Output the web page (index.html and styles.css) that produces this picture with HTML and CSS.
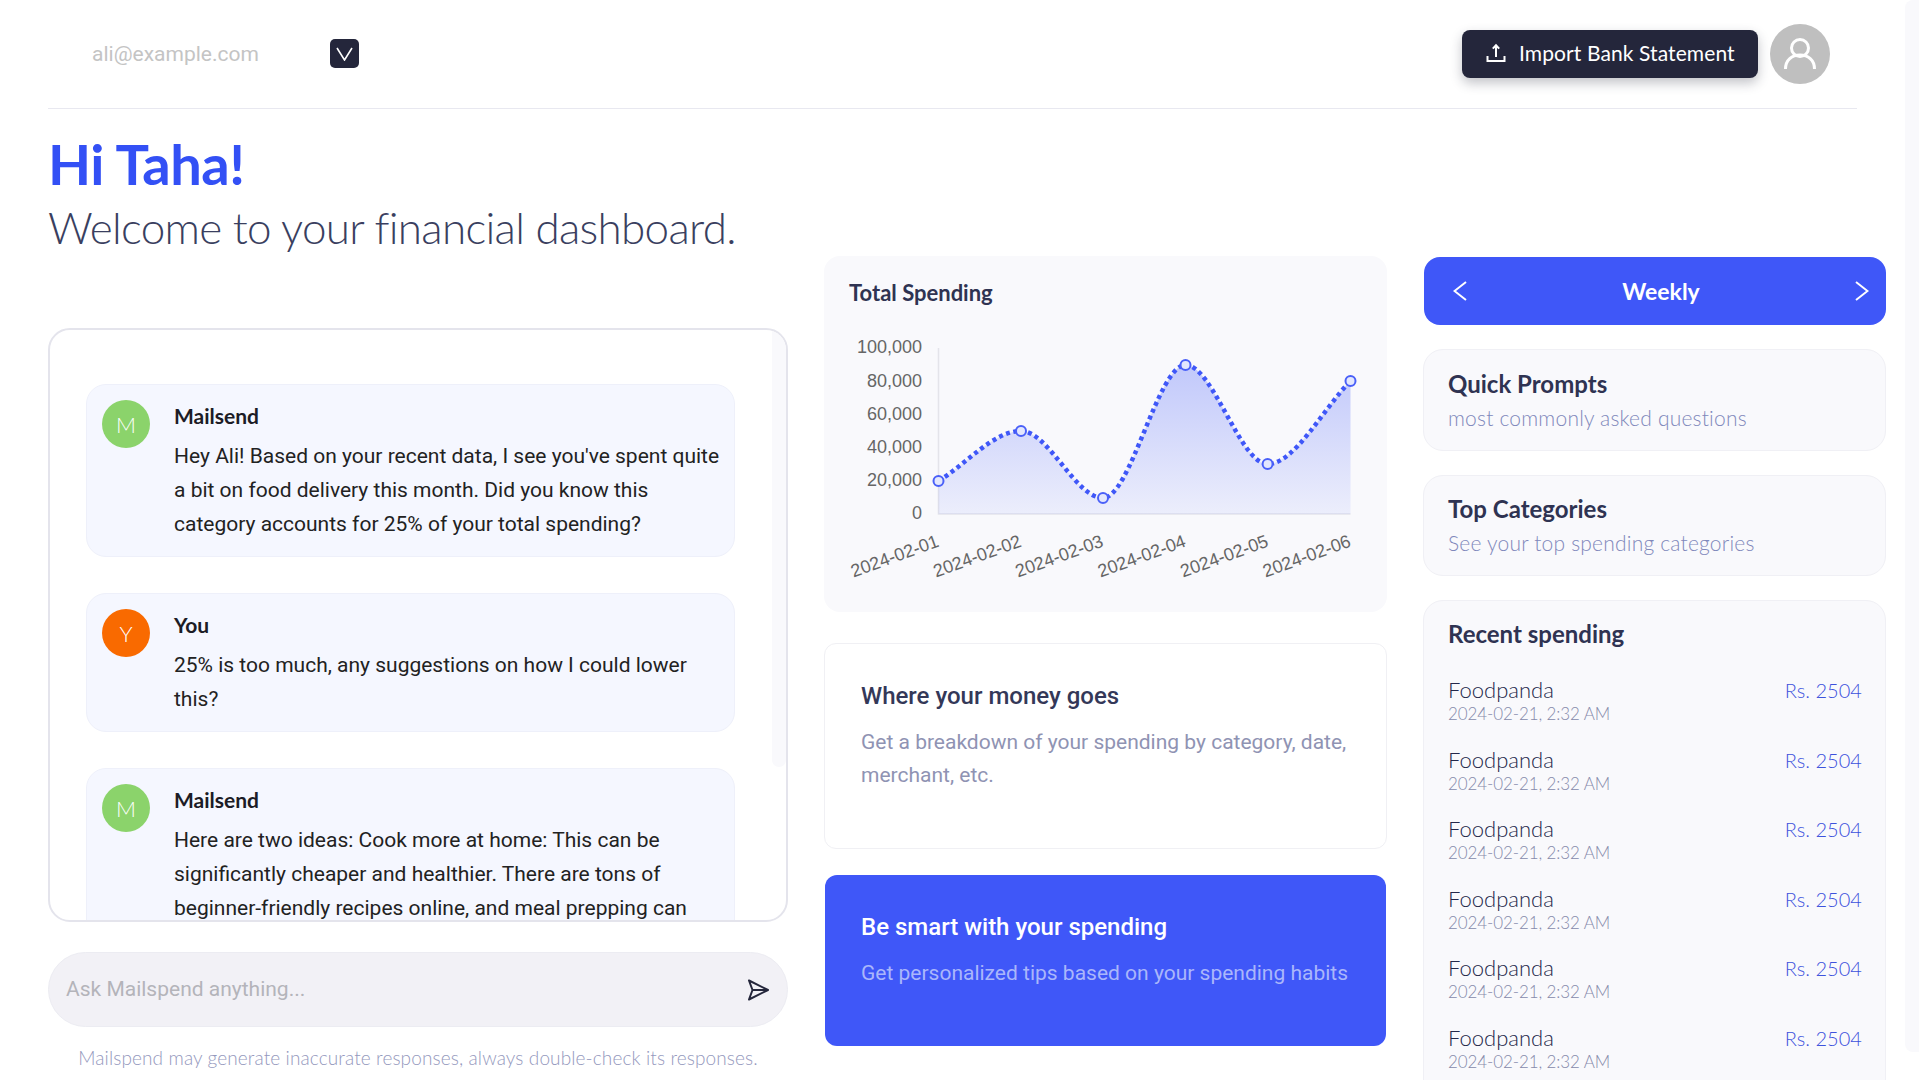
FILE: index.html
```html
<!DOCTYPE html>
<html lang="en">
<head>
<meta charset="utf-8">
<title>Mailspend dashboard</title>
<link rel="stylesheet" href="styles.css">
</head>
<body>
<div class="app">
  <div class="main">
    <header class="topbar">
      <div class="account">
        <span class="email">ali@example.com</span>
        <button class="drop" aria-label="Switch account">
          <svg width="17" height="14" viewBox="0 0 17 14"><path d="M1 1 8.500 13 16 1" class="thin"/></svg>
        </button>
      </div>
      <div class="actions">
        <button class="import">
          <svg width="20" height="20" viewBox="0 0 20 20"><path d="M10 14V2.500M6.800 5.600 10 2.200l3.200 3.400M1.500 13v5h17v-5" class="thin2"/></svg>
          <span>Import Bank Statement</span>
        </button>
        <div class="user">
          <svg width="36" height="36" viewBox="0 0 36 36"><circle cx="18" cy="12" r="8.500" class="uline"/><path d="M3.500 33c0-9 6.500-14 14.500-14s14.500 5 14.500 14" class="uline"/></svg>
        </div>
      </div>
    </header>

    <div class="grid">
      <section class="left">
        <h1 class="hi">Hi Taha!</h1>
        <p class="welcome">Welcome to your financial dashboard.</p>
        <div class="chat">
          <div class="chat-track"></div>
          <article class="msg">
            <div class="ava green">M</div>
            <div class="body">
              <h3>Mailsend</h3>
              <p>Hey Ali! Based on your recent data, I see you've spent quite a bit on food delivery this month. Did you know this category accounts for 25% of your total spending?</p>
            </div>
          </article>
          <article class="msg">
            <div class="ava orange">Y</div>
            <div class="body">
              <h3>You</h3>
              <p>25% is too much, any suggestions on how I could lower this?</p>
            </div>
          </article>
          <article class="msg">
            <div class="ava green">M</div>
            <div class="body">
              <h3>Mailsend</h3>
              <p>Here are two ideas: Cook more at home: This can be significantly cheaper and healthier. There are tons of beginner-friendly recipes online, and meal prepping can</p>
            </div>
          </article>
        </div>
        <div class="ask">
          <span class="ph">Ask Mailspend anything...</span>
          <svg width="22" height="22" viewBox="0 0 22 22"><path d="M2 1.500 21 11 2 20.500 5.500 11ZM5.500 11H21" class="send"/></svg>
        </div>
        <p class="note">Mailspend may generate inaccurate responses, always double-check its responses.</p>
      </section>

      <section class="mid">
        <div class="chart-card">
          <h2 class="chart-title">Total Spending</h2>
          <svg class="chart" width="561" height="276" viewBox="824 336 561 276">
            <defs>
              <linearGradient id="fill" x1="0" y1="0" x2="0" y2="1">
                <stop offset="0" stop-color="#3f57f8" stop-opacity=".3"/>
                <stop offset="1" stop-color="#3f57f8" stop-opacity=".07"/>
              </linearGradient>
            </defs>
            <path d="M938.500 348V514H1350.500" class="axis"/>
            <path d="M938.500 481C966 464.300 993.500 431 1021 431C1048.500 431 1075.500 498 1103 498C1130.500 498 1158 365 1185.500 365C1213 365 1240 464 1267.600 464C1295 464 1323 408.700 1350.500 381V514H938.500Z" fill="url(#fill)"/>
            <path d="M938.500 481C966 464.300 993.500 431 1021 431C1048.500 431 1075.500 498 1103 498C1130.500 498 1158 365 1185.500 365C1213 365 1240 464 1267.600 464C1295 464 1323 408.700 1350.500 381" class="line"/>
            <g class="pts">
              <circle cx="938.500" cy="481" r="5"/><circle cx="1021" cy="431" r="5"/><circle cx="1103" cy="498" r="5"/><circle cx="1185.500" cy="365" r="5"/><circle cx="1267.600" cy="464" r="5"/><circle cx="1350.500" cy="381" r="5"/>
            </g>
            <g class="yl">
              <text x="922" y="353">100,000</text><text x="922" y="386.500">80,000</text><text x="922" y="419.500">60,000</text><text x="922" y="452.500">40,000</text><text x="922" y="486">20,000</text><text x="922" y="519">0</text>
            </g>
            <g class="xl">
              <text transform="translate(940 546) rotate(-20)">2024-02-01</text>
              <text transform="translate(1022.500 546) rotate(-20)">2024-02-02</text>
              <text transform="translate(1104.500 546) rotate(-20)">2024-02-03</text>
              <text transform="translate(1187 546) rotate(-20)">2024-02-04</text>
              <text transform="translate(1269.500 546) rotate(-20)">2024-02-05</text>
              <text transform="translate(1352 546) rotate(-20)">2024-02-06</text>
            </g>
          </svg>
        </div>
        <div class="tile plain">
          <h3>Where your money goes</h3>
          <p>Get a breakdown of your spending by category, date, merchant, etc.</p>
        </div>
        <div class="tile blue">
          <h3>Be smart with your spending</h3>
          <p>Get personalized tips based on your spending habits</p>
        </div>
      </section>

      <section class="right">
        <div class="period">
          <svg width="14" height="20" viewBox="0 0 14 20"><path d="M13 1 1.500 10 13 19" class="chev"/></svg>
          <span>Weekly</span>
          <svg width="14" height="20" viewBox="0 0 14 20"><path d="M1 1 12.500 10 1 19" class="chev"/></svg>
        </div>
        <div class="card short">
          <h3>Quick Prompts</h3>
          <p>most commonly asked questions</p>
        </div>
        <div class="card short">
          <h3>Top Categories</h3>
          <p>See your top spending categories</p>
        </div>
        <div class="card recent">
          <h3>Recent spending</h3>
          <ul class="rows">
            <li><div><strong>Foodpanda</strong><time>2024-02-21, 2:32 AM</time></div><span>Rs. 2504</span></li>
            <li><div><strong>Foodpanda</strong><time>2024-02-21, 2:32 AM</time></div><span>Rs. 2504</span></li>
            <li><div><strong>Foodpanda</strong><time>2024-02-21, 2:32 AM</time></div><span>Rs. 2504</span></li>
            <li><div><strong>Foodpanda</strong><time>2024-02-21, 2:32 AM</time></div><span>Rs. 2504</span></li>
            <li><div><strong>Foodpanda</strong><time>2024-02-21, 2:32 AM</time></div><span>Rs. 2504</span></li>
            <li><div><strong>Foodpanda</strong><time>2024-02-21, 2:32 AM</time></div><span>Rs. 2504</span></li>
          </ul>
        </div>
      </section>
    </div>
  </div>
  <div class="pagebar"></div>
</div>
</body>
</html>
```
FILE: styles.css
```css
* { box-sizing: border-box; }
html, body { margin: 0; height: 100%; overflow: hidden; background: #fff; }
body { font-family: "Lato", "Liberation Sans", sans-serif; color: #2f3352; }
h1, h2, h3, p, ul { margin: 0; padding: 0; }
button { border: 0; font: inherit; padding: 0; }

.app { display: flex; height: 1080px; overflow: hidden; }
.main { width: 1905px; padding-left: 48px; flex: none; }
.pagebar { width: 14px; height: 1052px; background: #f9f9fc; border-radius: 8px 0 0 8px; flex: none; }

.topbar { width: 1809px; height: 109px; border-bottom: 1px solid #e8e8f0; display: flex; justify-content: space-between; align-items: center; padding: 0 27px 1px 44px; }
.account { display: flex; align-items: center; gap: 72px; }
.email { font-family: Roboto, sans-serif; font-size: 21px; color: #c4c4c4; width: 166px; white-space: nowrap; }
.drop { width: 29px; height: 29px; background: #24263b; border-radius: 5px; display: flex; align-items: center; justify-content: center; }
.thin { fill: none; stroke: #fff; stroke-width: 1.600; }
.actions { display: flex; align-items: center; gap: 12px; }
.import { width: 296px; height: 48px; background: #24263b; color: #fff; border-radius: 8px; display: flex; align-items: center; gap: 13px; padding: 0 0 2px 24px; font-size: 21px; font-weight: 400; letter-spacing: .1px; box-shadow: 0 5px 12px rgba(36,38,59,.28); }
.thin2 { fill: none; stroke: #fff; stroke-width: 2; }
.user { width: 60px; height: 60px; border-radius: 50%; background: #bfbfbf; display: flex; align-items: center; justify-content: center; }
.uline { fill: none; stroke: #fff; stroke-width: 3; }

.grid { display: grid; grid-template-columns: 740px 563px 463px; column-gap: 36px; }
.hi { margin-top: 23px; font-size: 56px; line-height: 64px; font-weight: 700; color: #3350f5; letter-spacing: -.5px; }
.welcome { margin-top: 3px; font-size: 44px; line-height: 56px; font-weight: 300; color: #3a3f60; letter-spacing: -.7px; }
.chat { position: relative; margin-top: 73px; height: 594px; border: 2px solid #e4e4ec; border-radius: 22px; overflow: hidden; padding: 54px 51px 0 36px; display: flex; flex-direction: column; gap: 36px; }
.chat-track { position: absolute; right: 0; top: 0; width: 14px; height: 437px; background: #f9f9fc; border-radius: 0 8px 8px 8px; }
.msg { background: #f5f7ff; border: 1px solid #eef0fa; border-radius: 20px; padding: 15px 8px 15px 15px; display: flex; gap: 24px; flex: none; }
.ava { width: 48px; height: 48px; border-radius: 50%; color: #fff; display: flex; align-items: center; justify-content: center; font-size: 22px; font-weight: 300; flex: none; }
.green { background: #8bd36b; }
.orange { background: #f96a00; }
.body h3 { font-size: 21px; line-height: 32px; font-weight: 700; color: #1c1c26; }
.body p { margin-top: 7px; font-family: Roboto, sans-serif; font-size: 21px; line-height: 34px; color: #222; }

.ask { margin-top: 30px; height: 75px; background: #f2f1f6; border: 1px solid #ececf2; border-radius: 38px; display: flex; align-items: center; justify-content: space-between; padding: 0 18px 0 17px; }
.ph { font-family: Roboto, sans-serif; font-size: 21px; line-height: 24px; padding-bottom: 1px; color: #b4b4ba; }
.send { fill: none; stroke: #24263b; stroke-width: 2; stroke-linejoin: round; }
.note { margin-top: 19px; text-align: center; font-size: 19px; line-height: 24px; font-weight: 300; color: #9498bd; letter-spacing: .12px; }

.mid { padding-top: 147px; display: flex; flex-direction: column; }
.chart-card { height: 356px; background: #f9f9fc; border-radius: 16px; padding-top: 23px; }
.chart-title { font-size: 22px; line-height: 28px; font-weight: 700; padding-left: 25px; color: #2f3352; }
.chart { display: block; margin-top: 29px; }
.axis { fill: none; stroke: #e4e4ea; stroke-width: 1.500; }
.line { fill: none; stroke: #3f57f8; stroke-width: 4.500; stroke-dasharray: 4 3.500; }
.pts circle { fill: #e3e7fd; stroke: #4a60f8; stroke-width: 2; }
.yl text { font-family: "Liberation Sans", sans-serif; font-size: 18px; fill: #666; text-anchor: end; }
.xl text { font-family: "Liberation Sans", sans-serif; font-size: 18px; fill: #666; text-anchor: end; }

.tile { border-radius: 12px; padding: 0 36px; font-family: Roboto, sans-serif; }
.tile h3 { font-size: 24px; line-height: 34px; font-weight: 500; }
.tile p { font-size: 21px; line-height: 33px; margin-top: 13px; }
.plain { margin-top: 31px; height: 206px; border: 1px solid #f0f0f4; padding-top: 35px; }
.plain h3 { color: #343858; }
.plain p { color: #8f93b3; }
.blue { margin: 26px 1px 0; height: 171px; background: #3f57f8; padding: 35px 36px 0; }
.blue h3 { color: #fff; }
.blue p { color: #aab6fb; }

.right { padding-top: 148px; display: flex; flex-direction: column; }
.period { height: 68px; width: 462px; margin-left: 1px; background: #3f57f8; border-radius: 16px; color: #fff; display: flex; align-items: center; justify-content: space-between; padding: 0 17px 0 29px; font-size: 23px; font-weight: 700; }
.chev { fill: none; stroke: #fff; stroke-width: 2; }
.card { background: #f9f9fc; border: 1px solid #f0f0f5; border-radius: 20px; padding: 0 24px; }
.card h3 { font-size: 24px; line-height: 32px; font-weight: 700; color: #2f3352; }
.short { margin-top: 24px; height: 101.500px; padding-top: 17.500px; }
.short p { font-size: 21px; line-height: 30px; font-weight: 300; color: #8088bb; margin-top: 3px; letter-spacing: .2px; }
.recent { margin-top: 24px; height: 520px; padding: 16.500px 23px 0 24px; }
.rows { list-style: none; margin-top: 26.500px; }
.rows li { display: flex; justify-content: space-between; align-items: flex-start; height: 69.600px; }
.rows strong { display: block; font-size: 22px; line-height: 28px; font-weight: 300; color: #24284a; }
.rows time { display: block; font-size: 17px; line-height: 20px; font-weight: 300; color: #868aab; letter-spacing: -.1px; }
.rows span { font-size: 20px; line-height: 28px; font-weight: 300; color: #3d52dc; letter-spacing: .05px; }
```
